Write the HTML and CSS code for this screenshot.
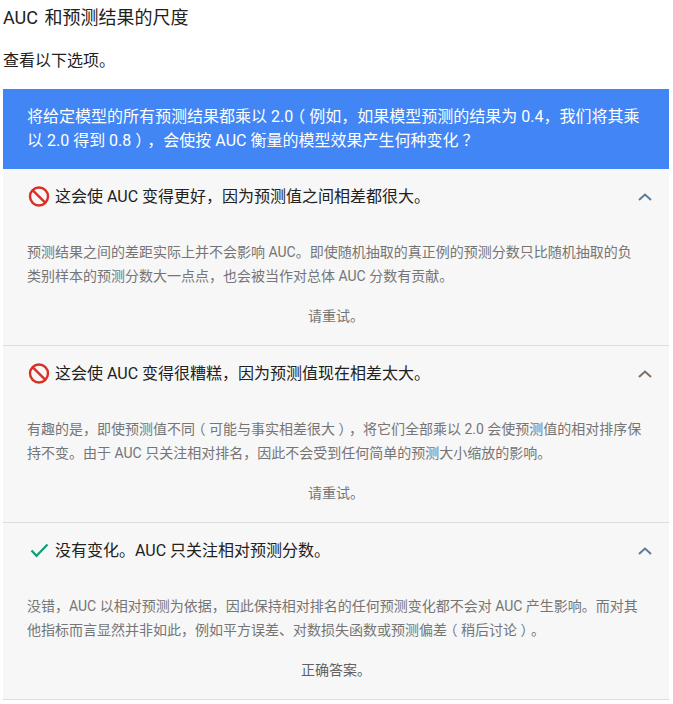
FILE: index.html
```html
<!DOCTYPE html>
<html lang="zh-CN">
<head>
<meta charset="utf-8">
<title>AUC 和预测结果的尺度</title>
<link rel="stylesheet" href="styles.css">
</head>
<body>
<main class="page">
  <h2 class="title">AUC 和预测结果的尺度</h2>
  <p class="intro">查看以下选项。</p>
  <section class="quiz">
    <div class="question">将给定模型的所有预测结果都乘以 2.0<span class="p paren">（</span>例如<span class="p">，</span>如果模型预测的结果为 0.4<span class="p">，</span>我们将其乘<br>以 2.0 得到 0.8<span class="p paren">）</span><span class="p">，</span>会使按 AUC 衡量的模型效果产生何种变化<span class="p mark-q">？</span></div>
    <article class="option">
      <header class="option-head">
        <svg class="mark" viewBox="0 0 24 24"><circle cx="12" cy="11.500" r="9" fill="none" stroke="#d93025" stroke-width="2.4"/><path d="M5.600 5.100 18.400 17.900" stroke="#d93025" stroke-width="2.4"/></svg>
        <span class="option-text">这会使 AUC 变得更好<span class="p">，</span>因为预测值之间相差都很大。</span>
        <svg class="chevron" viewBox="0 0 14 8"><path d="M1 7 7 1.500 13 7" fill="none" stroke="#5f7b93" stroke-width="2"/></svg>
      </header>
      <p class="explain">预测结果之间的差距实际上并不会影响 AUC。即使随机抽取的真正例的预测分数只比随机抽取的负<br>类别样本的预测分数大一点点<span class="p">，</span>也会被当作对总体 AUC 分数有贡献。</p>
      <p class="verdict">请重试。</p>
    </article>
    <article class="option">
      <header class="option-head">
        <svg class="mark" viewBox="0 0 24 24"><circle cx="12" cy="11.500" r="9" fill="none" stroke="#d93025" stroke-width="2.4"/><path d="M5.600 5.100 18.400 17.900" stroke="#d93025" stroke-width="2.4"/></svg>
        <span class="option-text">这会使 AUC 变得很糟糕<span class="p">，</span>因为预测值现在相差太大。</span>
        <svg class="chevron" viewBox="0 0 14 8"><path d="M1 7 7 1.500 13 7" fill="none" stroke="#7b6f66" stroke-width="2"/></svg>
      </header>
      <p class="explain">有趣的是<span class="p">，</span>即使预测值不同<span class="p paren">（</span>可能与事实相差很大<span class="p paren">）</span><span class="p">，</span>将它们全部乘以 2.0 会使预测值的相对排序保<br>持不变。由于 AUC 只关注相对排名<span class="p">，</span>因此不会受到任何简单的预测大小缩放的影响。</p>
      <p class="verdict">请重试。</p>
    </article>
    <article class="option">
      <header class="option-head">
        <svg class="mark" viewBox="0 0 24 24"><path d="M4.500 11.500 9.500 16.800 20.500 5.500" fill="none" stroke="#0f9d78" stroke-width="2.200"/></svg>
        <span class="option-text">没有变化。AUC 只关注相对预测分数。</span>
        <svg class="chevron" viewBox="0 0 14 8"><path d="M1 7 7 1.500 13 7" fill="none" stroke="#5f7b93" stroke-width="2"/></svg>
      </header>
      <p class="explain">没错<span class="p">，</span>AUC 以相对预测为依据<span class="p">，</span>因此保持相对排名的任何预测变化都不会对 AUC 产生影响。而对其<br>他指标而言显然并非如此<span class="p">，</span>例如平方误差、对数损失函数或预测偏差<span class="p paren">（</span>稍后讨论<span class="p paren">）</span>。</p>
      <p class="verdict verdict-ok">正确答案。</p>
    </article>
  </section>
</main>
</body>
</html>
```
FILE: styles.css
```css
* { box-sizing: border-box; }
html, body { margin: 0; background: #fff; }
body {
  font-family: Roboto, "Noto Sans CJK SC", sans-serif;
  color: #212121;
  overflow: hidden;
}
.page { width: 673px; padding: 0 4px 0 3px; }
.p { font-family: "Noto Sans CJK TC", sans-serif; line-height: 0; }
.paren { font-feature-settings: "halt"; margin: 0 .25em; }
.mark-q { margin-left: .25em; }
.title { margin: 0; padding-top: 6px; font-size: 18px; font-weight: 400; line-height: 24px; word-spacing: 2px; }
.intro { margin: 19px 0 0; font-size: 16px; line-height: 24px; }
.quiz { margin-top: 16px; }
.question {
  background: #4285f4;
  color: #fff;
  font-size: 16px;
  line-height: 24px;
  padding: 16px 24px;
  height: 80px;
  text-spacing-trim: space-all;
}
.option { background: #f7f7f7; border-bottom: 1px solid #dadce0; height: 177px; padding: 16px 17px 0 24px; text-spacing-trim: space-all; }
.option-head { display: flex; align-items: center; height: 24px; }
.mark { width: 24px; height: 24px; flex: none; margin-right: 4px; }
.option-text { flex: 1; font-size: 16px; line-height: 24px; color: #212121; }
.chevron { width: 14px; height: 8px; flex: none; }
.explain { margin: 31px 0 0; font-size: 14px; line-height: 24px; color: #757575; white-space: nowrap; }
.verdict { margin: 16px 7px 0 0; font-size: 14px; line-height: 24px; color: #757575; text-align: center; }
.verdict-ok { color: #616161; }
```
